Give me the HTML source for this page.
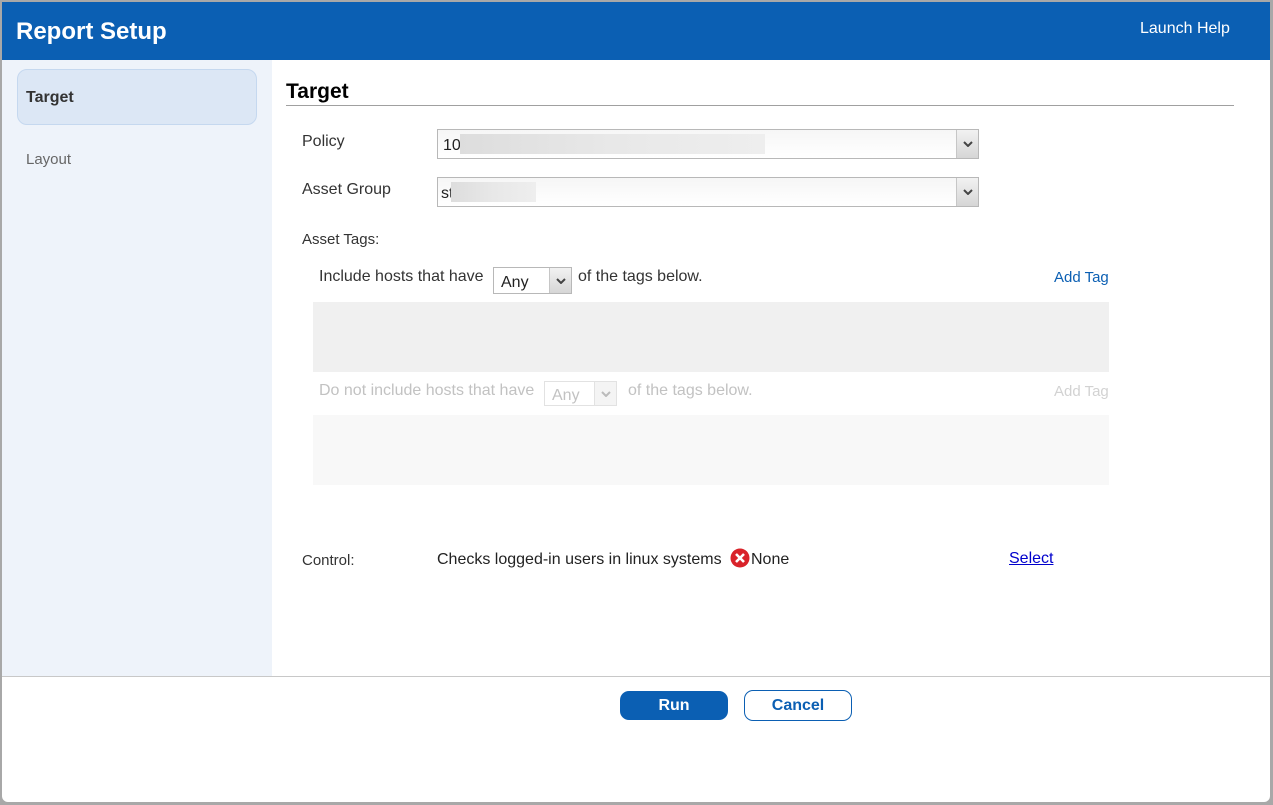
<!DOCTYPE html>
<html><head><style>
*{margin:0;padding:0;box-sizing:border-box}
body{width:1273px;height:805px;background:#a8a8a8;font-family:"Liberation Sans",Arial,sans-serif;position:relative;overflow:hidden}
#win{position:absolute;left:2px;top:2px;width:1268px;height:800px;background:#fff;border-radius:0 0 6px 6px;overflow:hidden}
.abs{position:absolute}
#hdr{left:0;top:0;width:1268px;height:58px;background:#0b5fb3}
#side{left:0;top:58px;width:270px;height:616px;background:#eef3fa}
.t{position:absolute;white-space:nowrap;font-size:16px;color:#333}
.sel{position:absolute;border:1px solid #b8b8b8;background:linear-gradient(#f6f6f6,#fff)}
.arr{position:absolute;right:0;top:0;bottom:0;width:22px;background:linear-gradient(#f2f2f2,#d6d6d6);border-left:1px solid #c6c6c6}
.arr svg{position:absolute;left:6px;top:50%;margin-top:-3px}
.blur{position:absolute;background:linear-gradient(90deg,#ddd,#e8e8e8 50%,#eee)}
</style></head><body>
<div id="win">
<div id="hdr" class="abs">
 <div class="t" style="left:14px;top:16px;font-size:24px;font-weight:bold;color:#fff">Report Setup</div>
 <div class="t" style="left:1138px;top:18px;color:#fff">Launch Help</div>
</div>
<div id="side" class="abs">
 <div class="abs" style="left:15px;top:9px;width:240px;height:56px;background:#dce7f5;border:1px solid #c5d8ef;border-radius:10px"></div>
 <div class="t" style="left:24px;top:29px;font-weight:bold;color:#333">Target</div>
 <div class="t" style="left:24px;top:91px;font-size:15px;color:#666">Layout</div>
</div>
<div class="t" style="left:284px;top:78px;font-size:21px;font-weight:bold;color:#000">Target</div>
<div class="abs" style="left:284px;top:103px;width:948px;height:1px;background:#a0a0a0"></div>

<div class="t" style="left:300px;top:131px">Policy</div>
<div class="sel" style="left:435px;top:127px;width:542px;height:30px"><div class="t" style="left:5px;top:7px;color:#222">10</div><div class="blur" style="left:22px;top:4px;width:305px;height:20px"></div><div class="arr"><svg width="10" height="6"><path d="M1 1L5 5L9 1" stroke="#444" stroke-width="2" fill="none"/></svg></div></div>

<div class="t" style="left:300px;top:179px">Asset Group</div>
<div class="sel" style="left:435px;top:175px;width:542px;height:30px"><div class="t" style="left:3px;top:7px;color:#222">st</div><div class="blur" style="left:13px;top:4px;width:85px;height:20px"></div><div class="arr"><svg width="10" height="6"><path d="M1 1L5 5L9 1" stroke="#444" stroke-width="2" fill="none"/></svg></div></div>

<div class="t" style="left:300px;top:229px;font-size:15px">Asset Tags:</div>
<div class="t" style="left:317px;top:266px">Include hosts that have</div>
<div class="sel" style="left:491px;top:265px;width:79px;height:27px;background:#fff"><div class="t" style="left:7px;top:6px;color:#222">Any</div><div class="arr"><svg width="10" height="6"><path d="M1 1L5 5L9 1" stroke="#444" stroke-width="2" fill="none"/></svg></div></div>
<div class="t" style="left:576px;top:266px">of the tags below.</div>
<div class="t" style="left:1052px;top:267px;font-size:15px;color:#0b5fb3">Add Tag</div>
<div class="abs" style="left:311px;top:300px;width:796px;height:70px;background:#f0f0f0"></div>

<div class="t" style="left:317px;top:380px;color:#c2c2c2">Do not include hosts that have</div>
<div class="sel" style="left:542px;top:379px;width:73px;height:25px;border-color:#e2e2e2;background:#fff"><div class="t" style="left:7px;top:5px;color:#c2c2c2">Any</div><div class="arr" style="background:#f4f4f4;border-color:#e2e2e2"><svg width="10" height="6"><path d="M1 1L5 5L9 1" stroke="#bbb" stroke-width="2" fill="none"/></svg></div></div>
<div class="t" style="left:626px;top:380px;color:#c2c2c2">of the tags below.</div>
<div class="t" style="left:1052px;top:381px;font-size:15px;color:#d2d2d2">Add Tag</div>
<div class="abs" style="left:311px;top:413px;width:796px;height:70px;background:#f8f8f8"></div>

<div class="t" style="left:300px;top:550px;font-size:15px">Control:</div>
<div class="t" style="left:435px;top:549px;color:#222">Checks logged-in users in linux systems</div>
<svg class="abs" style="left:728px;top:546px" width="20" height="20"><circle cx="10" cy="10" r="9.5" fill="#d9232a"/><path d="M6 6L14 14M14 6L6 14" stroke="#fff" stroke-width="2.6"/></svg>
<div class="t" style="left:749px;top:549px;color:#222">None</div>
<div class="t" style="left:1007px;top:548px;color:#00c;text-decoration:underline">Select</div>

<div class="abs" style="left:0;top:674px;width:1268px;height:1px;background:#c8c8c8"></div>
<div class="abs" style="left:618px;top:689px;width:108px;height:29px;background:#0b5fb3;border-radius:9px;color:#fff;font-weight:bold;font-size:16px;text-align:center;line-height:29px">Run</div>
<div class="abs" style="left:742px;top:688px;width:108px;height:31px;border:1px solid #0b5fb3;border-radius:9px;color:#0b5fb3;font-weight:bold;font-size:16px;text-align:center;line-height:29px">Cancel</div>
</div>
</body></html>
